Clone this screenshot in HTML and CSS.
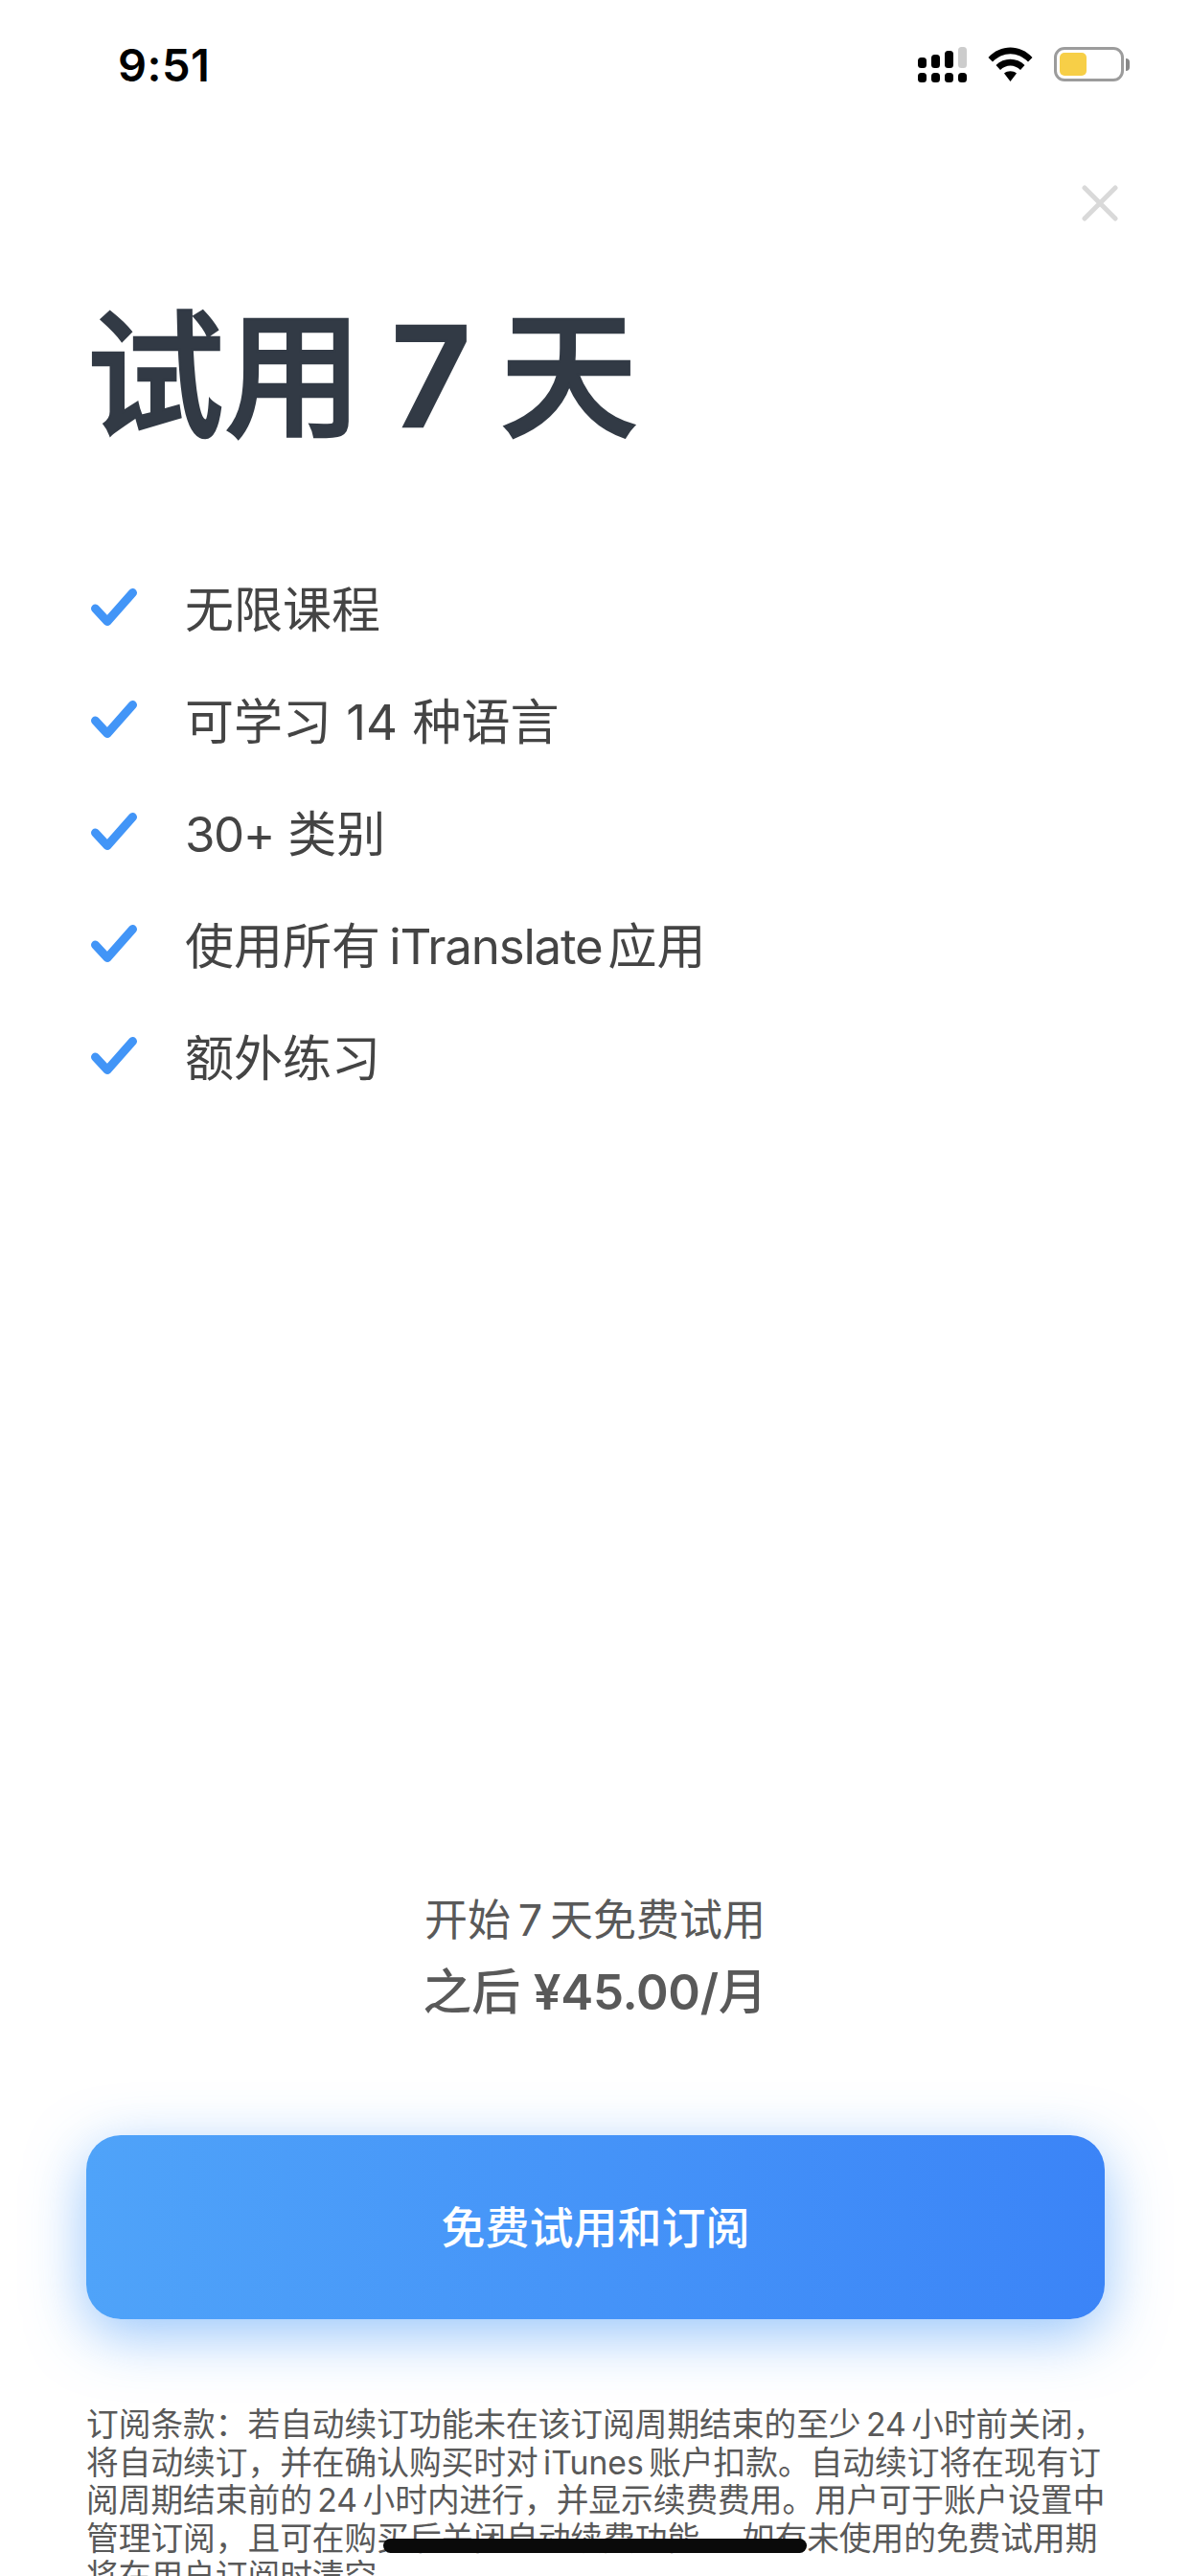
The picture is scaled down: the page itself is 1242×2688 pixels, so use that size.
FILE: index.html
```html
<html>
<head>
<title>试用 7 天</title>
<meta name="viewport" content="width=device-width, minimum-scale=1.0, maximum-scale=1.0, user-scalable=no"/>
<meta http-equiv="Content-Type" content="text/html; charset=UTF-8"/>
<link rel="stylesheet" href="styles.css">
</head>
<body>
	<div class="page">
		<div class="status-bar">
			<div class="status-time">9:51</div>
			<div class="status-icons">
				<svg class="icon-signal" width="51" height="37" viewBox="0 0 51 37">
					<rect x="0" y="11" width="9" height="11" rx="3.5" fill="#000"/>
					<rect x="14" y="8" width="9" height="14" rx="3.5" fill="#000"/>
					<rect x="28" y="4" width="9" height="18" rx="3.5" fill="#000"/>
					<rect x="42" y="0" width="9" height="22" rx="3.5" fill="#ccc"/>
					<rect x="0" y="27" width="9" height="10" rx="3.5" fill="#000"/>
					<rect x="14" y="27" width="9" height="10" rx="3.5" fill="#000"/>
					<rect x="28" y="27" width="9" height="10" rx="3.5" fill="#000"/>
					<rect x="42" y="27" width="9" height="10" rx="3.5" fill="#000"/>
				</svg>
				<svg class="icon-wifi" width="47" height="36" viewBox="0 0 47 36">
					<path d="M0.5 11 C13 -3 34 -3 46.5 11 L42 15.5 C31 4.5 16 4.5 5 15.5 Z" fill="#000"/>
					<path d="M8.5 19 C16.5 10.5 30.5 10.5 38.5 19 L34 24 C28 18 19 18 13 24 Z" fill="#000"/>
					<path d="M17 27.5 C20.5 24.5 26.5 24.5 30 27.5 L23.5 36 Z" fill="#000"/>
				</svg>
				<div class="battery">
					<div class="battery-body">
						<div class="battery-level"></div>
					</div>
					<div class="battery-nub"></div>
				</div>
			</div>
		</div>

		<div class="close-row">
			<svg width="38" height="38" viewBox="0 0 38 38">
				<path d="M3 3 L35 35 M35 3 L3 35" stroke="#d9d9d9" stroke-width="5" stroke-linecap="round" fill="none"/>
			</svg>
		</div>

		<h1 class="title">试用 <span class="title-num">7</span> 天</h1>

		<ul class="features">
			<li class="feature">
				<svg class="check" width="48" height="40" viewBox="0 0 48 40"><path d="M4.5 21 L17 34.5 L43.5 4.5" stroke="#4295f7" stroke-width="9" stroke-linecap="round" stroke-linejoin="round" fill="none"/></svg>
				<span>无限课程</span>
			</li>
			<li class="feature">
				<svg class="check" width="48" height="40" viewBox="0 0 48 40"><path d="M4.5 21 L17 34.5 L43.5 4.5" stroke="#4295f7" stroke-width="9" stroke-linecap="round" stroke-linejoin="round" fill="none"/></svg>
				<span class="wide-gaps">可学习 14 种语言</span>
			</li>
			<li class="feature">
				<svg class="check" width="48" height="40" viewBox="0 0 48 40"><path d="M4.5 21 L17 34.5 L43.5 4.5" stroke="#4295f7" stroke-width="9" stroke-linecap="round" stroke-linejoin="round" fill="none"/></svg>
				<span><span class="latin-tight">30+</span> 类别</span>
			</li>
			<li class="feature">
				<svg class="check" width="48" height="40" viewBox="0 0 48 40"><path d="M4.5 21 L17 34.5 L43.5 4.5" stroke="#4295f7" stroke-width="9" stroke-linecap="round" stroke-linejoin="round" fill="none"/></svg>
				<span class="tight-gaps">使用所有 <span class="latin-name">iTranslate</span>应用</span>
			</li>
			<li class="feature">
				<svg class="check" width="48" height="40" viewBox="0 0 48 40"><path d="M4.5 21 L17 34.5 L43.5 4.5" stroke="#4295f7" stroke-width="9" stroke-linecap="round" stroke-linejoin="round" fill="none"/></svg>
				<span>额外练习</span>
			</li>
		</ul>

		<div class="price">
			<div class="price-trial">开始 7 天免费试用</div>
			<div class="price-after">之后 <span class="price-amount">¥45.00/</span>月</div>
		</div>

		<div class="subscribe"><span class="subscribe-label">免费试用和订阅</span></div>

		<p class="terms">订阅条款：若自动续订功能未在该订阅周期结束的至少 24 小时前关闭，将自动续订，并在确认购买时对 iTunes 账户扣款。自动续订将在现有订阅周期结束前的 24 小时内进行，并显示续费费用。用户可于账户设置中管理订阅，且可在购买后关闭自动续费功能。<span class="terms-tail">如有未使用的免费试用期</span>将在用户订阅时清空。</p>

		<div class="home-bar"></div>
	</div>
</body>
</html>
```

FILE: styles.css
```css
html, body
{
	margin: 0;
	padding: 0;
	background-color: #fff;
}

body
{
	font-family: Inter, "Noto Sans CJK SC", sans-serif;
}

.page
{
	position: relative;
	display: flex;
	flex-direction: column;
	width: 1242px;
	height: 2688px;
	overflow: hidden;
}

.status-bar
{
	display: flex;
	justify-content: space-between;
	align-items: center;
	height: 36px;
	padding: 49px 63px 0 123px;
}

.status-time
{
	font-size: 47px;
	font-weight: 600;
	color: #000;
	letter-spacing: 0.5px;
}

.status-icons
{
	display: flex;
	align-items: center;
	gap: 22px;
}

.battery
{
	display: flex;
	align-items: center;
	gap: 2px;
}

.battery-body
{
	box-sizing: border-box;
	width: 73px;
	height: 36px;
	padding: 3px;
	border: 3px solid #9c9c9c;
	border-radius: 11px;
}

.battery-level
{
	width: 28px;
	height: 100%;
	background-color: #f7cf47;
	border-radius: 5px;
}

.battery-nub
{
	width: 4px;
	height: 13px;
	background-color: #888;
	border-radius: 0 4px 4px 0;
}

.close-row
{
	display: flex;
	justify-content: flex-end;
	padding: 108px 75px 0 0;
}

.title
{
	margin: 82px 0 0 0;
	padding-left: 90px;
	font-size: 144px;
	line-height: 160px;
	font-weight: 500;
	color: #323a45;
	word-spacing: -8px;
	-webkit-text-stroke: 2.5px #323a45;
}

.title-num
{
	font-weight: 600;
}

.features
{
	list-style: none;
	margin: 101px 0 0 0;
	padding: 0 0 0 95px;
}

.feature
{
	display: flex;
	align-items: center;
	height: 117px;
	font-size: 51px;
	color: #444;
}

.check
{
	margin: 2px 50px 0 0;
}

.wide-gaps
{
	word-spacing: 1px;
}

.tight-gaps
{
	word-spacing: -5px;
}

.latin-tight
{
	letter-spacing: -1.5px;
}

.latin-name
{
	letter-spacing: -1.2px;
	margin-right: 6px;
}

.price
{
	margin-top: auto;
	text-align: center;
	color: #595959;
}

.price-trial
{
	font-size: 45px;
	line-height: 74px;
	word-spacing: -5px;
	padding-top: 1px;
}

.price-after
{
	font-size: 51px;
	line-height: 74px;
	font-weight: 500;
	padding-top: 1px;
}

.price-amount
{
	font-weight: 600;
	letter-spacing: -0.3px;
}

.subscribe
{
	display: flex;
	justify-content: center;
	align-items: center;
	box-sizing: border-box;
	height: 192px;
	margin: 112px 89px 0 90px;
	padding-bottom: 7px;
	font-size: 46px;
	font-weight: 500;
	color: #fff;
	background: linear-gradient(90deg, #4fa3f9, #3b84f7);
	border-radius: 36px;
	box-shadow: 0 16px 60px rgba(66,149,247,0.55);
}

.terms
{
	width: 1075px;
	height: 178px;
	margin: 90px 0 0 90px;
	font-size: 33.7px;
	line-height: 39.5px;
	color: #595959;
	word-spacing: -4px;
}

.terms-tail
{
	margin-left: 11px;
}

.home-bar
{
	position: absolute;
	left: 400px;
	top: 2649px;
	width: 442px;
	height: 15px;
	background-color: #0a0a0a;
	border-radius: 8px;
}
```
